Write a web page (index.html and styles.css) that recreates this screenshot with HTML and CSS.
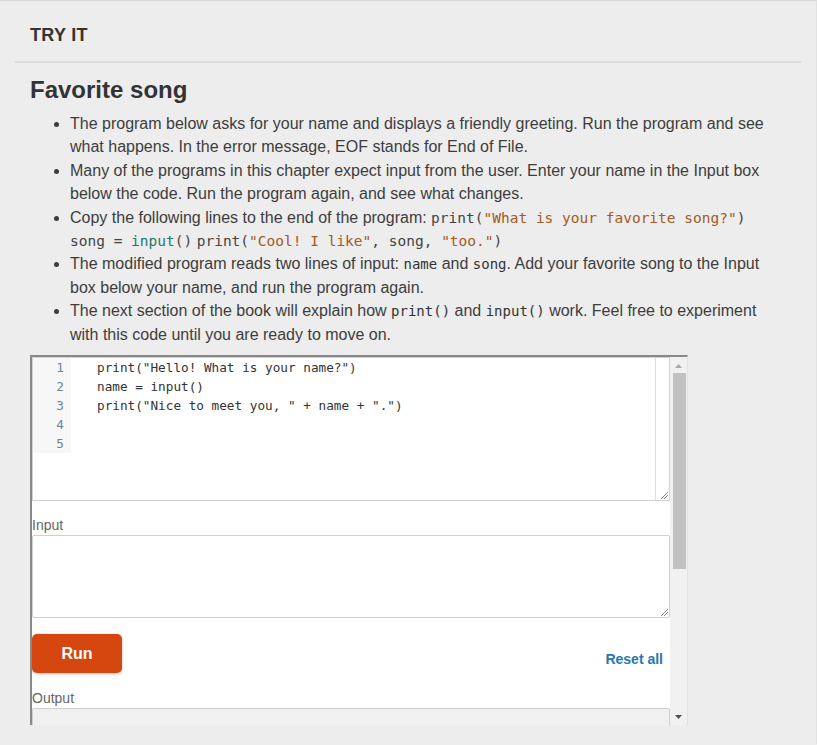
FILE: index.html
```html
<!DOCTYPE html>
<html lang="en">
<head>
<meta charset="utf-8">
<title>Try it</title>
<link rel="stylesheet" href="styles.css">
</head>
<body>
<div class="page">
  <div class="tryit">TRY IT</div>
  <div class="rule"></div>
  <section class="content">
    <h2 class="title">Favorite song</h2>
    <ul class="steps">
      <li>The program below asks for your name and displays a friendly greeting. Run the program and see what happens. In the error message, EOF stands for End of File.</li>
      <li>Many of the programs in this chapter expect input from the user. Enter your name in the Input box below the code. Run the program again, and see what changes.</li>
      <li>Copy the following lines to the end of the program: <code class="hl">print(<span class="str">"What is your favorite song?"</span>)</code> <code class="hl">song = <span class="bi">input</span>()</code> <code class="hl">print(<span class="str">"Cool! I like"</span>, song, <span class="str">"too."</span>)</code></li>
      <li>The modified program reads two lines of input: <code>name</code> and <code>song</code>. Add your favorite song to the Input box below your name, and run the program again.</li>
      <li>The next section of the book will explain how <code>print()</code> and <code>input()</code> work. Feel free to experiment with this code until you are ready to move on.</li>
    </ul>
    <div class="frame">
      <div class="frame-body">
        <div class="editor">
          <div class="gutter">
            <div>1</div><div>2</div><div>3</div><div>4</div><div>5</div>
          </div>
          <pre class="code">print("Hello! What is your name?")
name = input()
print("Nice to meet you, " + name + ".")</pre>
          <div class="vstrip">
            <svg class="grip" width="9" height="9" viewBox="0 0 9 9"><path d="M1 8 L8 1 M4 8 L8 4" stroke="#8a8a8a" stroke-width="1" fill="none"/></svg>
          </div>
        </div>
        <div class="label">Input</div>
        <div class="textbox">
          <svg class="grip" width="9" height="9" viewBox="0 0 9 9"><path d="M1 8 L8 1 M4 8 L8 4" stroke="#8a8a8a" stroke-width="1" fill="none"/></svg>
        </div>
        <div class="actions">
          <button class="run" type="button">Run</button>
          <a class="reset">Reset all</a>
        </div>
        <div class="label">Output</div>
        <div class="output"></div>
      </div>
      <div class="scrollbar">
        <svg class="arrow" width="17" height="17" viewBox="0 0 17 17"><path d="M5 11 L12 11 L8.5 7 Z" fill="#a8a8a8"/></svg>
        <div class="thumb"></div>
        <svg class="arrow down" width="17" height="17" viewBox="0 0 17 17"><path d="M5 7 L12 7 L8.5 11 Z" fill="#505050"/></svg>
      </div>
    </div>
  </section>
</div>
</body>
</html>
```

FILE: styles.css
```css
html, body {
  margin: 0;
  padding: 0;
  background: #ededed;
}

body {
  font-family: "Liberation Sans", Arial, sans-serif;
  color: #3d3d3d;
  height: 745px;
  overflow: hidden;
}

.page {
  border-top: 1px solid #d9d9d9;
  border-right: 1px solid #e2e2e2;
  padding: 0 15px;
  height: 744px;
  box-sizing: border-box;
}

.tryit {
  padding: 24px 15px 0;
  font-size: 18px;
  line-height: 21px;
  font-weight: bold;
  letter-spacing: 0.3px;
  color: #333;
}

.rule {
  margin-top: 15px;
  height: 2px;
  background: #dcdcdc;
}

.content {
  padding: 0 15px;
}

.title {
  margin: 12px 0 0;
  font-size: 24px;
  line-height: 29px;
  font-weight: bold;
  color: #333;
}

.steps {
  margin: 8px 0 0;
  padding-left: 40px;
  font-size: 16px;
  line-height: 23.4px;
  width: 745px;
  box-sizing: border-box;
}

code {
  font-family: "DejaVu Sans Mono", "Liberation Mono", monospace;
  font-size: 14px;
  line-height: 1;
  color: #333;
}

code.hl {
  font-size: 14.5px;
  color: #444;
}

.str { color: #a25b26; }
.bi { color: #227a6c; }

.frame {
  margin-top: 9px;
  width: 658px;
  height: 370px;
  box-sizing: border-box;
  border-top: 2px solid #898989;
  border-left: 2px solid #898989;
  border-right: 1px solid #e2e2e2;
  display: flex;
  overflow: hidden;
}

.frame-body {
  flex: 1;
  background: #fff;
  overflow: hidden;
}

.editor {
  height: 144px;
  box-sizing: border-box;
  border: 1px solid #d2d2d2;
  display: flex;
  align-items: flex-start;
}

.gutter {
  width: 38px;
  box-sizing: border-box;
  padding-right: 7px;
  background: #f7f7f7;
  text-align: right;
  font-family: "DejaVu Sans Mono", "Liberation Mono", monospace;
  font-size: 12.7px;
  line-height: 19px;
  color: #6b8594;
}

.code {
  flex: 1;
  margin: 0;
  padding-left: 26px;
  font-family: "DejaVu Sans Mono", "Liberation Mono", monospace;
  font-size: 12.7px;
  line-height: 19px;
  color: #333;
}

.vstrip {
  align-self: stretch;
  width: 13px;
  border-left: 1px solid #dedede;
  position: relative;
}

.grip {
  position: absolute;
  right: 0;
  bottom: 0;
}

.label {
  font-size: 14px;
  line-height: 16px;
  color: #666;
  margin-top: 16px;
  margin-bottom: 2px;
}

.textbox {
  position: relative;
  height: 83px;
  box-sizing: border-box;
  border: 1px solid #cfcfcf;
  border-radius: 2px;
}

.actions {
  margin-top: 16px;
  display: flex;
  justify-content: space-between;
  align-items: flex-end;
}

.run {
  width: 90px;
  height: 39px;
  border: none;
  border-radius: 5px;
  background: #d5470f;
  color: #fff;
  font-family: "Liberation Sans", Arial, sans-serif;
  font-size: 16px;
  font-weight: bold;
  box-shadow: 0 1px 3px rgba(0, 0, 0, 0.25);
  padding: 0;
}

.reset {
  font-size: 14px;
  line-height: 16px;
  font-weight: bold;
  color: #2878a8;
  margin: 0 7px 6px 0;
}

.actions + .label {
  margin-top: 17px;
}

.output {
  height: 60px;
  box-sizing: border-box;
  border: 1px solid #cfcfcf;
  border-radius: 2px;
  background: #f0f0f0;
}

.scrollbar {
  width: 17px;
  background: #f1f1f1;
  display: flex;
  flex-direction: column;
}

.arrow {
  display: block;
  flex: none;
}

.thumb {
  margin: -1px 1px 0 3px;
  width: 13px;
  height: 196px;
  background: #c1c1c1;
}

.arrow.down {
  margin-top: auto;
}
```
